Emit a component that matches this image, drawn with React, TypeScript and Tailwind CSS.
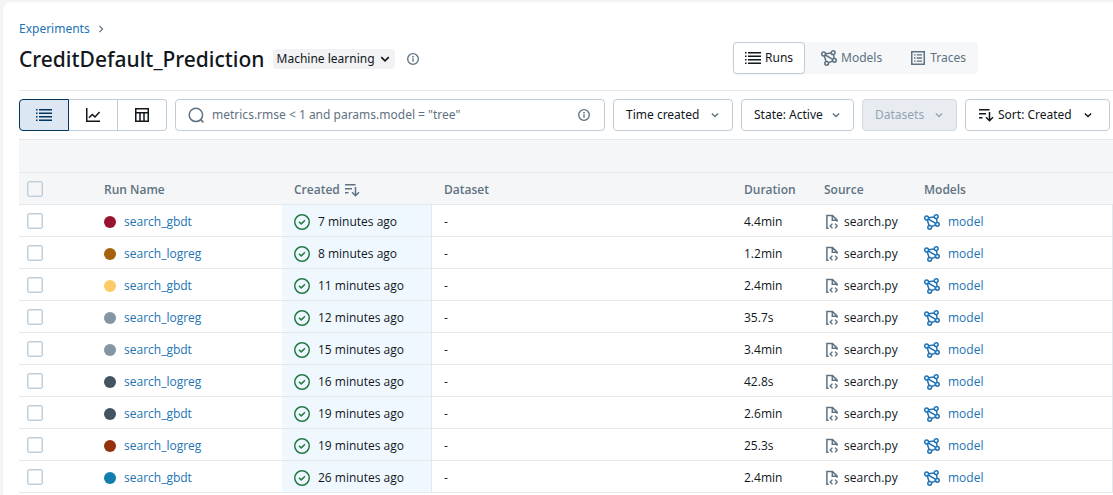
import React from "react";

type IconProps = { className?: string };

function Svg({ className = "size-4", children }: IconProps & { children: React.ReactNode }) {
  return (
    <svg viewBox="0 0 16 16" fill="none" aria-hidden="true" className={`shrink-0 ${className}`}>
      {children}
    </svg>
  );
}

function ListIcon({ className }: IconProps) {
  return (
    <Svg className={className}>
      <path
        fill="currentColor"
        d="M3 2h13v1.5H3zM3 5.5h13V7H3zM3 9h13v1.5H3zM3 12.5h13V14H3zM0 2h1.5v1.5H0zM0 5.5h1.5V7H0zM0 9h1.5v1.5H0zM0 12.5h1.5V14H0z"
      />
    </Svg>
  );
}

function ChartIcon({ className }: IconProps) {
  return (
    <Svg className={className}>
      <path stroke="currentColor" strokeWidth="1.5" d="M1.75 1v13.25H15" />
      <path stroke="currentColor" strokeWidth="1.5" d="M4 10.8 7.2 7.5l2.8 2.4L14.6 5" />
    </Svg>
  );
}

function TableIcon({ className }: IconProps) {
  return (
    <Svg className={className}>
      <path stroke="currentColor" strokeWidth="1.5" d="M1.75 1.75h12.5v12.5H1.75zM1.75 5.75h12.5M6 5.75v8.5M10 5.75v8.5" />
    </Svg>
  );
}

function ModelsIcon({ className }: IconProps) {
  return (
    <Svg className={className}>
      <g stroke="currentColor" strokeWidth="1.5">
        <circle cx="2.6" cy="4" r="1.9" />
        <circle cx="12.2" cy="2.7" r="1.9" />
        <circle cx="13.4" cy="10.3" r="1.9" />
        <circle cx="5.7" cy="13.3" r="1.9" />
        <path d="m4.5 3.7 5.8-.8M12.6 4.6l.5 3.8M11.6 11l-4.1 1.6M3.2 5.8l1.9 5.7M4.2 5l7.6 4.3" />
      </g>
    </Svg>
  );
}

function TracesIcon({ className }: IconProps) {
  return (
    <Svg className={className}>
      <path stroke="currentColor" strokeWidth="1.5" d="M1.75 1.75h12.5v12.5H1.75z" />
      <path fill="currentColor" d="M4 4.2h1.5v1.4H4zM6.7 4.2H12v1.4H6.7zM4 7.3h1.5v1.4H4zM6.7 7.3H12v1.4H6.7zM4 10.4h1.5v1.4H4zM6.7 10.4H12v1.4H6.7z" />
    </Svg>
  );
}

function InfoIcon({ className }: IconProps) {
  return (
    <Svg className={className}>
      <circle cx="8" cy="8" r="7.1" stroke="currentColor" strokeWidth="1.8" />
      <path fill="currentColor" d="M7.1 7h1.8v4.8H7.1zM7 4.1h2v1.8H7z" />
    </Svg>
  );
}

function SearchIcon({ className }: IconProps) {
  return (
    <Svg className={className}>
      <circle cx="7.9" cy="7.9" r="6.7" stroke="currentColor" strokeWidth="1.5" />
      <path stroke="currentColor" strokeWidth="1.5" d="m12.4 12.4 3 3" />
    </Svg>
  );
}

function SortIcon({ className }: IconProps) {
  return (
    <Svg className={className}>
      <path stroke="currentColor" strokeWidth="1.5" d="M1 2.75h10.5M1 6.75h7M1 10.75h3.5M11.5 5v8.5M8 10.2l3.5 3.5 3.5-3.5" />
    </Svg>
  );
}

function ChevronDown({ className }: IconProps) {
  return (
    <Svg className={className}>
      <path stroke="currentColor" strokeWidth="2.2" d="m3 5.5 5 5 5-5" />
    </Svg>
  );
}

function ChevronRight({ className }: IconProps) {
  return (
    <Svg className={className}>
      <path stroke="currentColor" strokeWidth="2" d="m5.5 3 5 5-5 5" />
    </Svg>
  );
}

function CheckCircleIcon({ className }: IconProps) {
  return (
    <Svg className={className}>
      <circle cx="8" cy="8" r="7.25" stroke="currentColor" strokeWidth="1.5" />
      <path stroke="currentColor" strokeWidth="1.5" d="m5 7.8 2.2 2.1L11 6.2" />
    </Svg>
  );
}

function FileCodeIcon({ className }: IconProps) {
  return (
    <Svg className={className}>
      <path stroke="currentColor" strokeWidth="1.5" d="M4.6 14.2H2.9V1.5h5.6l4.6 4.6v1.7M8.3 1.5v4.8h4.8" />
      <path stroke="currentColor" strokeWidth="1.4" d="M8.4 9.6 6.2 12l2.2 2.4M11 9.6l2.2 2.4-2.2 2.4" />
    </Svg>
  );
}

const runs = [
  { name: "search_gbdt", dot: "bg-[#99122f]", created: "7 minutes ago", duration: "4.4min" },
  { name: "search_logreg", dot: "bg-[#a6630c]", created: "8 minutes ago", duration: "1.2min" },
  { name: "search_gbdt", dot: "bg-[#facb66]", created: "11 minutes ago", duration: "2.4min" },
  { name: "search_logreg", dot: "bg-[#8396a5]", created: "12 minutes ago", duration: "35.7s" },
  { name: "search_gbdt", dot: "bg-[#8396a5]", created: "15 minutes ago", duration: "3.4min" },
  { name: "search_logreg", dot: "bg-[#445461]", created: "16 minutes ago", duration: "42.8s" },
  { name: "search_gbdt", dot: "bg-[#445461]", created: "19 minutes ago", duration: "2.6min" },
  { name: "search_logreg", dot: "bg-[#93320b]", created: "19 minutes ago", duration: "25.3s" },
  { name: "search_gbdt", dot: "bg-[#137dae]", created: "26 minutes ago", duration: "2.4min" },
];

function Checkbox({ label }: { label: string }) {
  return (
    <input
      type="checkbox"
      aria-label={label}
      className="block size-4 appearance-none rounded-xs border border-[#c0cdd8] shadow-[inset_0_0_0_1px_#dfe7ee] checked:bg-[#2272b4]"
    />
  );
}

const filterButton =
  "flex h-8 shrink-0 items-center justify-between rounded border border-[#c0cdd8] px-3 text-[#11171c]";
const headCell = "h-8 border-b border-[#e4e8eb] px-3 pt-0.5 text-left font-semibold text-[#5f7281]";
const cell = "h-8 border-b border-[#e4e8eb] px-3 pt-0.5";

export default function App() {
  return (
    <div className="min-h-screen bg-[#f3f4f6] pt-0.5 pl-[3px] font-['Noto_Sans','Open_Sans',sans-serif] text-xs text-[#11171c]">
      <main className="min-h-[calc(100vh-2px)] rounded-tl-lg bg-white pl-4">
        <nav aria-label="Breadcrumb" className="flex h-10 items-end gap-1.5 pb-[3px] leading-5">
          <a href="#experiments" className="text-[#2272b4]">Experiments</a>
          <span className="flex h-5 items-center">
            <ChevronRight className="size-2.5 text-[#5f7281]" />
          </span>
        </nav>

        <header className="flex h-[49px] items-start justify-between border-b border-[#e4e8eb] pr-[135px]">
          <div className="flex h-[34px] items-center">
            <h1 className="text-[21px] leading-8 font-medium">
              CreditDefault_Prediction
            </h1>
            <button className="ml-2 flex h-5 items-center gap-1 rounded bg-[#f2f2f4] px-1">
              Machine learning
              <ChevronDown className="size-3" />
            </button>
            <button aria-label="Experiment details" className="ml-3 text-[#5f7281]">
              <InfoIcon className="size-3" />
            </button>
          </div>
          <div className="flex h-8 rounded bg-[#f5f7f9] text-[#5f7281]">
            <button className="flex items-center gap-1 rounded border border-[#c0cdd8] bg-white px-[11px] text-[#11171c] shadow-xs">
              <ListIcon />
              Runs
            </button>
            <button className="flex items-center gap-1 pr-3 pl-4">
              <ModelsIcon />
              Models
            </button>
            <button className="flex items-center gap-1 pr-3 pl-4">
              <TracesIcon />
              Traces
            </button>
          </div>
        </header>

        <div className="flex items-center gap-2 py-2 pr-[3px]">
          <div className="flex h-8 shrink-0">
            <button aria-label="Table view" className="flex w-[50px] items-center justify-center rounded-l border border-[#04355d] bg-[#dce7f3] text-[#04355d]">
              <ListIcon />
            </button>
            <button aria-label="Chart view" className="flex w-[49px] items-center justify-center border-y border-r border-[#c0cdd8]">
              <ChartIcon />
            </button>
            <button aria-label="Column view" className="flex w-[49px] items-center justify-center rounded-r border-y border-r border-[#c0cdd8]">
              <TableIcon />
            </button>
          </div>
          <div className="flex h-8 min-w-0 flex-1 items-center gap-2 rounded border border-[#c0cdd8] px-3 text-[#5f7281]">
            <SearchIcon />
            <input
              type="text"
              aria-label="Search runs"
              placeholder={'metrics.rmse < 1 and params.model = "tree"'}
              className="min-w-0 flex-1 outline-none placeholder:text-[#5f7281]"
            />
            <button aria-label="Search syntax help" className="mr-0.5">
              <InfoIcon className="size-3" />
            </button>
          </div>
          <button className={`${filterButton} w-[120px]`}>
            Time created
            <ChevronDown className="size-2.5 text-[#5f7281]" />
          </button>
          <button className={`${filterButton} w-[113px]`}>
            State: Active
            <ChevronDown className="size-2.5 text-[#5f7281]" />
          </button>
          <button disabled className="flex h-8 w-[95px] shrink-0 items-center justify-between rounded border border-[#d1d9e1] bg-[#e8ecf0] px-3 text-[#92a4b3]">
            Datasets
            <ChevronDown className="size-2.5" />
          </button>
          <button className={`${filterButton} w-[145px]`}>
            <span className="flex items-center gap-1">
              <SortIcon />
              Sort: Created
            </span>
            <span className="pr-1">
              <ChevronDown className="size-2.5" />
            </span>
          </button>
        </div>

        <table className="w-full table-fixed border-separate border-spacing-0 border-t border-[#e4e8eb] font-['Open_Sans','Noto_Sans',sans-serif]">
          <colgroup>
            <col className="w-[73px]" />
            <col className="w-[190px]" />
            <col className="w-[150px]" />
            <col className="w-[300px]" />
            <col className="w-20" />
            <col className="w-[100px]" />
            <col />
          </colgroup>
          <thead className="bg-[#f5f6f8]">
            <tr>
              <td colSpan={7} className="h-[33px] border-b border-[#e4e8eb]" />
            </tr>
            <tr>
              <th className="h-8 border-b border-[#e4e8eb] px-2">
                <Checkbox label="Select all runs" />
              </th>
              <th className={headCell}>Run Name</th>
              <th className={headCell}>
                <span className="flex items-center gap-1">
                  Created
                  <SortIcon />
                </span>
              </th>
              <th className={headCell}>Dataset</th>
              <th className={headCell}>Duration</th>
              <th className={headCell}>Source</th>
              <th className={headCell}>Models</th>
            </tr>
          </thead>
          <tbody>
            {runs.map((run, i) => (
              <tr key={i}>
                <td className="h-8 border-b border-[#e4e8eb] px-2">
                  <Checkbox label={`Select run ${i + 1}, ${run.name}`} />
                </td>
                <td className={cell}>
                  <span className="flex items-center gap-2">
                    <span className={`size-3 rounded-full ${run.dot}`} />
                    <a href="#run" className="text-[#2272b4]">{run.name}</a>
                  </span>
                </td>
                <td className={`${cell} border-r bg-[#f0f8ff]`}>
                  <span className="flex items-center gap-2">
                    <CheckCircleIcon className="size-4 text-[#277c43]" />
                    {run.created}
                  </span>
                </td>
                <td className={cell}>-</td>
                <td className={cell}>{run.duration}</td>
                <td className={`${cell} whitespace-nowrap`}>
                  <span className="flex items-center gap-1">
                    <FileCodeIcon className="size-4 text-[#5f7281]" />
                    search.py
                  </span>
                </td>
                <td className={`${cell} border-r`}>
                  <a href="#model" className="flex items-center gap-2 text-[#2272b4]">
                    <ModelsIcon />
                    model
                  </a>
                </td>
              </tr>
            ))}
          </tbody>
        </table>
      </main>
    </div>
  );
}
